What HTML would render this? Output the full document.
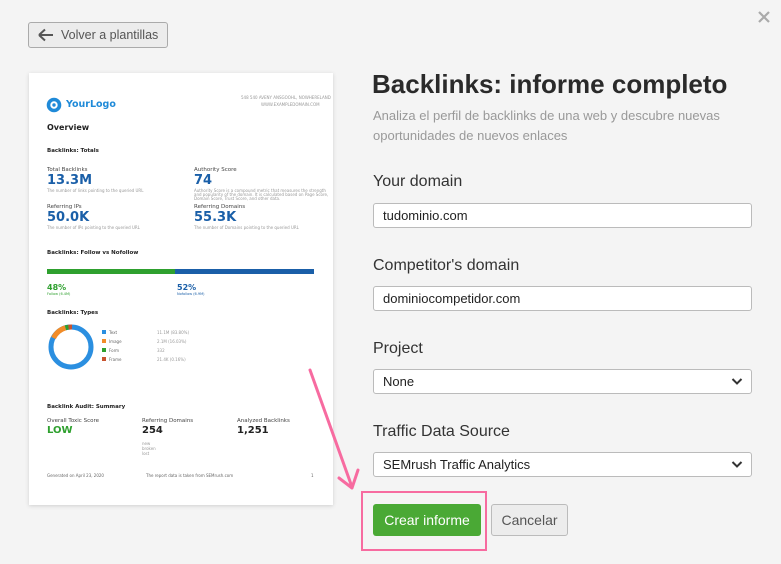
<!DOCTYPE html>
<html><head><meta charset="utf-8"><style>
*{margin:0;padding:0;box-sizing:border-box}
body{width:781px;height:564px;background:#f4f4f4;font-family:"Liberation Sans",sans-serif;position:relative;overflow:hidden;color:#333}
.a{position:absolute}
.card{left:29px;top:73px;width:304px;height:432px;background:#fff;box-shadow:0 1px 4px rgba(0,0,0,.15)}
.c{position:absolute;font-family:"DejaVu Sans",sans-serif;white-space:nowrap}
.lbl{font-size:16px;color:#333}
.inp{position:absolute;left:373px;width:379px;height:25px;background:#fff;border:1px solid #bbb;border-radius:3px;font-size:13px;padding:0 9px;line-height:23px;color:#222}
.chev{position:absolute;right:8px;top:7px}
.t{font-size:4px;color:#999}
.big{font-size:13px;font-weight:bold;color:#1a5fa8}
.sm{font-size:5.5px;color:#444}
.h{font-size:5.5px;font-weight:bold;color:#222}
</style></head><body>
<div class="a" style="left:28px;top:22px;width:140px;height:26px;border:1px solid #aaa;border-radius:3px;background:#ececec;font-size:12.5px;color:#555;line-height:24px;padding-left:32px">Volver a plantillas</div>
<svg class="a" style="left:37px;top:28px" width="18" height="14"><path d="M2 7H16M2 7L8 1.5M2 7L8 12.5" stroke="#555" stroke-width="2" fill="none"/></svg>
<svg class="a" style="left:757px;top:10px" width="14" height="14"><path d="M2 2L12 12M12 2L2 12" stroke="#aaa" stroke-width="2.2"/></svg>

<div class="a card">
 <svg class="c" style="left:17px;top:24px" width="16" height="16"><circle cx="8" cy="8" r="5.5" fill="none" stroke="#1f8ad8" stroke-width="3.6"/><circle cx="8" cy="8" r="1.7" fill="#1f8ad8"/></svg>
 <div class="c" style="left:37px;top:26px;font-size:9.5px;font-weight:bold;color:#1f8ad8">YourLogo</div>
 <div class="c t" style="left:212px;top:22px">548 540 AVENY ANSGOOHL, NOWHERELAND</div>
 <div class="c t" style="left:232px;top:29px">WWW.EXAMPLEDOMAIN.COM</div>
 <div class="c" style="left:18px;top:50px;font-size:8px;font-weight:bold;color:#222">Overview</div>
 <div class="c h" style="left:18px;top:75px">Backlinks: Totals</div>
 <div class="c sm" style="left:18px;top:94px">Total Backlinks</div>
 <div class="c big" style="left:18px;top:100px">13.3M</div>
 <div class="c t" style="left:18px;top:115px">The number of links pointing to the queried URL</div>
 <div class="c sm" style="left:165px;top:94px">Authority Score</div>
 <div class="c big" style="left:165px;top:100px">74</div>
 <div class="c t" style="left:165px;top:115px">Authority Score is a compound metric that measures the strength</div>
 <div class="c t" style="left:165px;top:119px">and popularity of the domain. It is calculated based on Page Score,</div>
 <div class="c t" style="left:165px;top:123px">Domain Score, Trust Score, and other data.</div>
 <div class="c sm" style="left:18px;top:131px">Referring IPs</div>
 <div class="c big" style="left:18px;top:137px">50.0K</div>
 <div class="c t" style="left:18px;top:152px">The number of IPs pointing to the queried URL</div>
 <div class="c sm" style="left:165px;top:131px">Referring Domains</div>
 <div class="c big" style="left:165px;top:137px">55.3K</div>
 <div class="c t" style="left:165px;top:152px">The number of Domains pointing to the queried URL</div>
 <div class="c h" style="left:18px;top:177px">Backlinks: Follow vs Nofollow</div>
 <div class="c" style="left:18px;top:196px;width:128px;height:5px;background:#2ea02e"></div>
 <div class="c" style="left:146px;top:196px;width:139px;height:5px;background:#1a5fa8"></div>
 <div class="c" style="left:18px;top:210px;font-size:8px;font-weight:bold;color:#2ea02e">48%</div>
 <div class="c" style="left:18px;top:219px;font-size:3.5px;color:#2ea02e">Follow (6.4M)</div>
 <div class="c" style="left:148px;top:210px;font-size:8px;font-weight:bold;color:#1a5fa8">52%</div>
 <div class="c" style="left:148px;top:219px;font-size:3.5px;color:#1a5fa8">Nofollow (6.9M)</div>
 <div class="c h" style="left:18px;top:237px">Backlinks: Types</div>
 <svg class="c" style="left:18px;top:250px" width="48" height="48"><circle cx="24" cy="24" r="20" fill="none" stroke="#2b8fe0" stroke-width="5"/><path d="M6.5 15A20 20 0 0 1 18.5 4.8" fill="none" stroke="#f28c28" stroke-width="5"/><path d="M18.5 4.8A20 20 0 0 1 21.5 4.2" fill="none" stroke="#2ea02e" stroke-width="5"/><path d="M21.5 4.2A20 20 0 0 1 25 4" fill="none" stroke="#c8532e" stroke-width="5"/></svg>
 <div class="c" style="left:73px;top:257px;width:4px;height:4px;background:#2b8fe0"></div><div class="c t" style="left:80px;top:257px;color:#666">Text</div>
 <div class="c" style="left:73px;top:266px;width:4px;height:4px;background:#f28c28"></div><div class="c t" style="left:80px;top:266px;color:#666">Image</div>
 <div class="c" style="left:73px;top:275px;width:4px;height:4px;background:#2ea02e"></div><div class="c t" style="left:80px;top:275px;color:#666">Form</div>
 <div class="c" style="left:73px;top:284px;width:4px;height:4px;background:#c8532e"></div><div class="c t" style="left:80px;top:284px;color:#666">Frame</div>
 <div class="c t" style="left:128px;top:257px">11.1M (83.80%)</div>
 <div class="c t" style="left:128px;top:266px">2.1M (16.03%)</div>
 <div class="c t" style="left:128px;top:275px">332</div>
 <div class="c t" style="left:128px;top:284px">21.4K (0.16%)</div>
 <div class="c h" style="left:18px;top:331px">Backlink Audit: Summary</div>
 <div class="c sm" style="left:18px;top:345px">Overall Toxic Score</div>
 <div class="c" style="left:18px;top:352px;font-size:10px;font-weight:bold;color:#2ea02e">LOW</div>
 <div class="c sm" style="left:113px;top:345px">Referring Domains</div>
 <div class="c" style="left:113px;top:352px;font-size:10px;font-weight:bold;color:#222">254</div>
 <div class="c t" style="left:113px;top:368px">new<br>broken<br>lost</div>
 <div class="c sm" style="left:208px;top:345px">Analyzed Backlinks</div>
 <div class="c" style="left:208px;top:352px;font-size:10px;font-weight:bold;color:#222">1,251</div>
 <div class="c t" style="left:18px;top:400px;color:#666">Generated on April 23, 2020</div>
 <div class="c t" style="left:117px;top:400px;color:#666">The report data is taken from SEMrush.com</div>
 <div class="c t" style="left:282px;top:400px;color:#666">1</div>
</div>

<div class="a" style="left:372px;top:69px;font-size:26px;font-weight:bold;color:#2a2a2a">Backlinks: informe completo</div>
<div class="a" style="left:373px;top:106px;font-size:13px;color:#999;line-height:20px">Analiza el perfil de backlinks de una web y descubre nuevas<br>oportunidades de nuevos enlaces</div>
<div class="a lbl" style="left:373px;top:173px">Your domain</div>
<div class="inp" style="top:203px">tudominio.com</div>
<div class="a lbl" style="left:373px;top:257px">Competitor's domain</div>
<div class="inp" style="top:286px">dominiocompetidor.com</div>
<div class="a lbl" style="left:373px;top:340px">Project</div>
<div class="inp" style="top:369px">None<svg class="chev" width="12" height="9"><path d="M1.5 2L6 6.5L10.5 2" stroke="#333" stroke-width="2" fill="none"/></svg></div>
<div class="a lbl" style="left:373px;top:423px">Traffic Data Source</div>
<div class="inp" style="top:452px">SEMrush Traffic Analytics<svg class="chev" width="12" height="9"><path d="M1.5 2L6 6.5L10.5 2" stroke="#333" stroke-width="2" fill="none"/></svg></div>

<div class="a" style="left:361px;top:491px;width:126px;height:60px;border:2px solid #f76ba0"></div>
<div class="a" style="left:373px;top:504px;width:108px;height:32px;background:#4aa935;border-radius:3px;color:#fff;font-size:14px;text-align:center;line-height:32px">Crear informe</div>
<div class="a" style="left:491px;top:504px;width:77px;height:32px;background:#ececec;border:1px solid #bbb;border-radius:3px;color:#555;font-size:14px;text-align:center;line-height:30px">Cancelar</div>
<svg class="a" style="left:300px;top:360px" width="70" height="140"><path d="M10 10L52 127M39 118L52 128L58 110" stroke="#f76ba0" stroke-width="3" fill="none" stroke-linecap="round" stroke-linejoin="round"/></svg>
</body></html>
